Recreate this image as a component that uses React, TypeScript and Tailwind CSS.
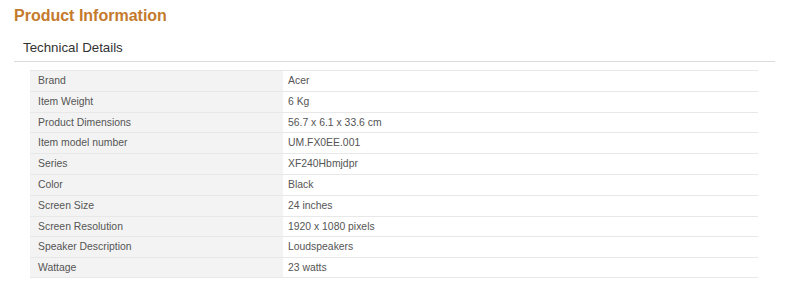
import React from "react";

const rows: [string, string][] = [
  ["Brand", "Acer"],
  ["Item Weight", "6 Kg"],
  ["Product Dimensions", "56.7 x 6.1 x 33.6 cm"],
  ["Item model number", "UM.FX0EE.001"],
  ["Series", "XF240Hbmjdpr"],
  ["Color", "Black"],
  ["Screen Size", "24 inches"],
  ["Screen Resolution", "1920 x 1080 pixels"],
  ["Speaker Description", "Loudspeakers"],
  ["Wattage", "23 watts"],
];

export default function App() {
  return (
    <div className="w-[808px] h-[294px] bg-white font-['Liberation_Sans',Arial,sans-serif] overflow-hidden">
      <div className="pl-[14px] pt-[6px]">
        <h1 className="text-[16px] leading-[20px] font-bold text-[#c47a2c]">Product Information</h1>
      </div>
      <div className="ml-[14px] mr-[33px] mt-[10px] border-b border-[#dcdcdc]">
        <h2 className="pl-[9px] text-[13.3px] leading-[24px] pb-[1px] text-[#333]">Technical Details</h2>
      </div>
      <div className="ml-[30px] mr-[50px] mt-[8px]">
        {rows.map(([k, v]) => (
          <div key={k} className="flex h-[20.8px] border-t border-[#e8e8e8] last:border-b text-[10.4px] text-[#555]">
            <div className="w-[253px] bg-[#f3f3f3] pl-[8px] flex items-center">{k}</div>
            <div className="flex-1 pl-[5px] flex items-center">{v}</div>
          </div>
        ))}
      </div>
    </div>
  );
}
